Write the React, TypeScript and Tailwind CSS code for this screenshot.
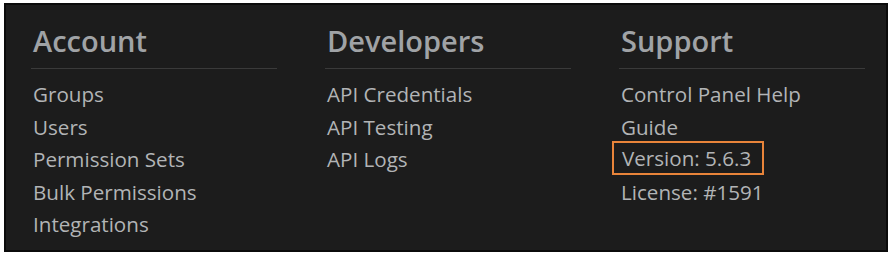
import React from "react";

const cols = [
  { title: "Account", items: ["Groups", "Users", "Permission Sets", "Bulk Permissions", "Integrations"] },
  { title: "Developers", items: ["API Credentials", "API Testing", "API Logs"] },
  { title: "Support", items: ["Control Panel Help", "Guide", "Version: 5.6.3", "License: #1591"] },
];

export default function App() {
  return (
    <div className="w-[890px] h-[255px] bg-white pt-[3px] pl-[4px]" style={{ fontFamily: '"Open Sans", "Noto Sans", sans-serif' }}>
      <div className="w-[884px] h-[249px] bg-[#1c1c1c] border-2 border-[#0b0b0b] pl-[25px] pt-[18px] grid grid-cols-[294px_294px_246px] items-start">
        {cols.map((c) => (
          <div key={c.title} className="flex flex-col">
            <div className="w-[246px] border-b border-[#3a3a3a] pb-[9px]">
              <div className="pl-[2px] text-[29px] leading-[36px] text-[#a0a3a6] font-semibold">{c.title}</div>
            </div>
            <ul className="mt-[9px] flex flex-col">
              {c.items.map((it) =>
                it.startsWith("Version") ? (
                  <li key={it} className="h-[32.5px] flex items-start -ml-[7px]">
                    <span className="-mt-[2px] border-2 border-[#e8843a] h-[34px] w-[152px] pl-[8px] flex items-center text-[20.6px] text-[#b2b4b6]">
                      {it}
                    </span>
                  </li>
                ) : (
                  <li key={it} className="pl-[2px] h-[32.5px] leading-[32.5px] text-[20.6px] text-[#b2b4b6]">
                    {it}
                  </li>
                )
              )}
            </ul>
          </div>
        ))}
      </div>
    </div>
  );
}
